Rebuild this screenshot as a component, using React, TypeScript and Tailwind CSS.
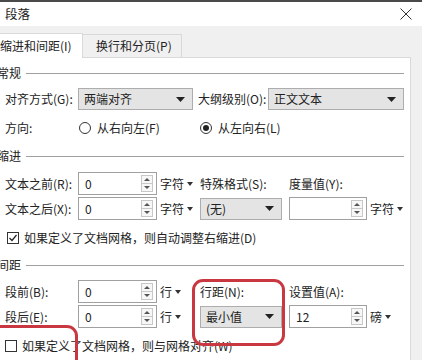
import React from "react";

const FONT = { fontFamily: '"Noto Sans CJK SC", "Noto Sans", sans-serif' };

function Caret() {
  return (
    <svg width="6" height="4" viewBox="0 0 6 4" className="ml-[3px]">
      <path d="M0 0 L6 0 L3 4 Z" fill="#333" />
    </svg>
  );
}

function Select({ w, text }: { w: string; text: string }) {
  return (
    <div
      className={`${w} h-[22px] bg-[#e4e4e4] border border-[#adadad] flex items-center justify-between pl-[5px] pr-[7px] text-[12px] text-[#222]`}
    >
      <span>{text}</span>
      <svg width="9" height="5" viewBox="0 0 9 5">
        <path d="M0 0 L9 0 L4.5 5 Z" fill="#222" />
      </svg>
    </div>
  );
}

function Spin({ w, value }: { w: string; value: string }) {
  return (
    <div
      className={`${w} h-[23px] bg-white border border-[#a0a0a0] flex items-center justify-between pl-[6px] pr-[3px] text-[12px] text-[#222]`}
    >
      <span>{value}</span>
      <div className="w-[12px] h-[17px] border border-[#c8c8c8] bg-[#f7f7f7] flex flex-col">
        <div className="flex-1 flex items-center justify-center border-b border-[#c8c8c8]">
          <svg width="6" height="3" viewBox="0 0 6 3">
            <path d="M0 3 L6 3 L3 0 Z" fill="#555" />
          </svg>
        </div>
        <div className="flex-1 flex items-center justify-center">
          <svg width="6" height="3" viewBox="0 0 6 3">
            <path d="M0 0 L6 0 L3 3 Z" fill="#555" />
          </svg>
        </div>
      </div>
    </div>
  );
}

function Unit({ text, w }: { text: string; w: string }) {
  return (
    <div className={`${w} flex items-center pl-[3px] text-[12px] text-[#222]`}>
      <span>{text}</span>
      <Caret />
    </div>
  );
}

function Header({ text }: { text: string }) {
  return (
    <div className="h-[16px] flex items-center ml-[-3px] mr-[6px]">
      <span className="text-[12px] text-[#222] whitespace-nowrap">{text}</span>
      <div className="flex-1 h-px bg-[#a0a0a0] ml-[5px]" />
    </div>
  );
}

function Radio({ checked }: { checked?: boolean }) {
  return (
    <div className="w-[12px] h-[12px] rounded-full border border-[#333] flex items-center justify-center bg-white">
      {checked && <div className="w-[6px] h-[6px] rounded-full bg-[#222]" />}
    </div>
  );
}

function Checkbox({ checked }: { checked?: boolean }) {
  return (
    <div className="w-[12px] h-[12px] border border-[#333] bg-white flex items-center justify-center">
      {checked && (
        <svg width="10" height="10" viewBox="0 0 10 10">
          <path d="M1.5 5 L4 7.5 L8.5 2" stroke="#222" strokeWidth="1.2" fill="none" />
        </svg>
      )}
    </div>
  );
}

export default function App() {
  return (
    <div
      className="w-[422px] h-[360px] overflow-hidden bg-[#f0f0f0] relative flex flex-col"
      style={FONT}
    >
      {/* top dark strip */}
      <div className="h-[2px] bg-[#4a4a4a]" />
      {/* title bar */}
      <div className="h-[24px] bg-white flex items-center justify-between pl-[5px] pr-[10px]">
        <span className="text-[12.5px] text-[#222]">段落</span>
        <svg width="12" height="12" viewBox="0 0 12 12">
          <path d="M0.5 0.5 L11.5 11.5 M11.5 0.5 L0.5 11.5" stroke="#333" strokeWidth="1" />
        </svg>
      </div>
      {/* tabs */}
      <div className="h-[31px] flex items-end">
        <div className="w-[83px] h-[25px] bg-white border-t border-r border-[#d9d9d9] flex items-center text-[12px] text-[#222] relative top-px z-10">
          <span>缩进和间距(I)</span>
        </div>
        <div className="w-[99px] h-[23px] bg-[#f0f0f0] border-t border-r border-[#d9d9d9] flex items-center text-[12px] text-[#222] pl-[13px]">
          换行和分页(P)
        </div>
      </div>
      {/* panel */}
      <div className="flex-1 flex">
        <div className="w-[411px] bg-white border-t border-r border-[#d9d9d9] flex flex-col pt-[7px]">
          <Header text="常规" />
          {/* align row */}
          <div className="mt-[7px] h-[22px] flex items-center">
            <div className="w-[78px] pl-[5px] text-[12px] text-[#222]">对齐方式(G):</div>
            <Select w="w-[115px]" text="两端对齐" />
            <div className="w-[75px] pl-[5px] text-[12px] text-[#222] whitespace-nowrap">大纲级别(O):</div>
            <Select w="w-[136px]" text="正文文本" />
          </div>
          {/* direction row */}
          <div className="mt-[10px] h-[16px] flex items-center">
            <div className="w-[79px] pl-[5px] text-[12px] text-[#222]">方向:</div>
            <Radio />
            <span className="ml-[6px] w-[103px] text-[12px] text-[#222]">从右向左(F)</span>
            <Radio checked />
            <span className="ml-[6px] text-[12px] text-[#222]">从左向右(L)</span>
          </div>
          <div className="mt-[12px]">
            <Header text="缩进" />
          </div>
          {/* indent rows */}
          <div className="mt-[8px] h-[23px] flex items-center">
            <div className="w-[78px] pl-[5px] text-[12px] text-[#222]">文本之前(R):</div>
            <Spin w="w-[79px]" value="0" />
            <Unit w="w-[43px]" text="字符" />
            <div className="w-[89px] text-[12px] text-[#222]">特殊格式(S):</div>
            <div className="text-[12px] text-[#222]">度量值(Y):</div>
          </div>
          <div className="mt-[2px] h-[23px] flex items-center">
            <div className="w-[78px] pl-[5px] text-[12px] text-[#222]">文本之后(X):</div>
            <Spin w="w-[79px]" value="0" />
            <Unit w="w-[43px]" text="字符" />
            <Select w="w-[82px]" text="(无)" />
            <div className="w-[7px]" />
            <Spin w="w-[78px]" value="" />
            <Unit w="w-[40px]" text="字符" />
          </div>
          {/* checkbox */}
          <div className="mt-[10px] h-[16px] flex items-center pl-[7px]">
            <Checkbox checked />
            <span className="ml-[5px] text-[12px] text-[#222] whitespace-nowrap">
              如果定义了文档网格，则自动调整右缩进(D)
            </span>
          </div>
          <div className="mt-[11px]">
            <Header text="间距" />
          </div>
          {/* spacing rows */}
          <div className="mt-[7px] h-[23px] flex items-center">
            <div className="w-[78px] pl-[5px] text-[12px] text-[#222]">段前(B):</div>
            <Spin w="w-[79px]" value="0" />
            <Unit w="w-[43px]" text="行" />
            <div className="w-[89px] text-[12px] text-[#222]">行距(N):</div>
            <div className="text-[12px] text-[#222]">设置值(A):</div>
          </div>
          <div className="mt-[2px] h-[23px] flex items-center">
            <div className="w-[78px] pl-[5px] text-[12px] text-[#222]">段后(E):</div>
            <Spin w="w-[79px]" value="0" />
            <Unit w="w-[43px]" text="行" />
            <Select w="w-[82px]" text="最小值" />
            <div className="w-[7px]" />
            <Spin w="w-[78px]" value="12" />
            <Unit w="w-[40px]" text="磅" />
          </div>
          <div className="mt-[10px] h-[16px] flex items-center pl-[5px]">
            <Checkbox />
            <span className="ml-[5px] text-[12px] text-[#222] whitespace-nowrap">
              如果定义了文档网格，则与网格对齐(W)
            </span>
          </div>
        </div>
      </div>

      {/* red annotation boxes */}
      <div className="absolute left-[192px] top-[279px] w-[93px] h-[67px] border-[3px] border-[#c93841] rounded-[11px]" />
      <div className="absolute left-[-30px] top-[325px] w-[108px] h-[70px] border-[3px] border-[#c93841] rounded-[11px]" />
    </div>
  );
}
